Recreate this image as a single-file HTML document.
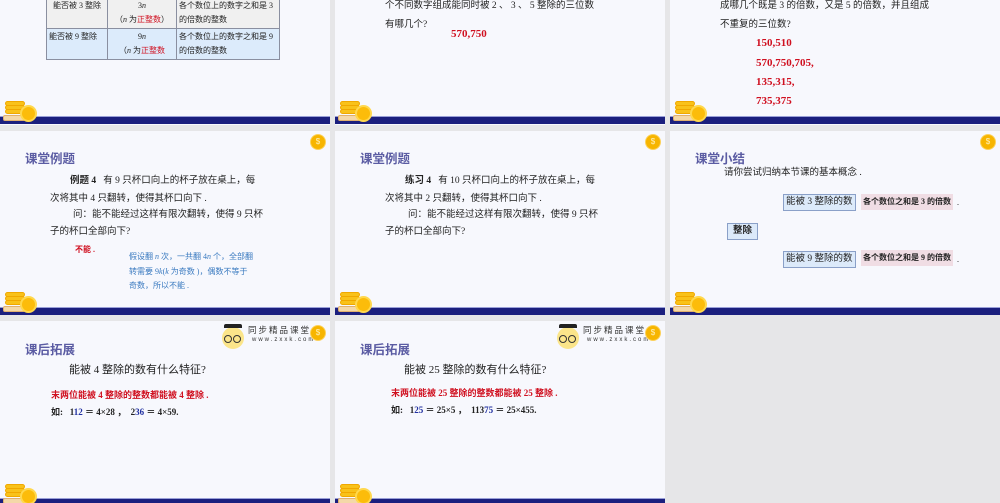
<!DOCTYPE html>
<html><head><meta charset="utf-8"><style>
*{margin:0;padding:0;box-sizing:border-box}
body{width:1000px;height:503px;background:#e6e6e8;position:relative;overflow:hidden;font-family:"Liberation Serif","Noto Sans CJK SC",serif;color:#222}
.s{position:absolute;background:#f7f8fd;overflow:hidden}
.bar{position:absolute;left:0;right:0;height:8px;background:#1b1f7e;border-top:1px solid #9aa0d8;z-index:1}
.a{position:absolute;white-space:nowrap;font-size:9.5px;line-height:18px}
.t{position:absolute;font-family:"Liberation Sans","Noto Sans CJK SC",sans-serif;font-weight:bold;color:#5b5ca3;font-size:12.5px}
.r{color:#d01020;font-weight:bold}
.b{color:#2030a0}
.coin{position:absolute;width:14px;height:14px;border-radius:50%;background:#f7b500;box-shadow:0 0 0 1px #fcd15a;color:#fff3c0;font:8px "Liberation Sans",sans-serif;text-align:center;line-height:14px;z-index:3}
.stack{position:absolute;left:3px;width:34px;height:22px;z-index:2}
.stack i{position:absolute;left:2px;width:20px;height:5px;border-radius:3px;background:#f9c21a;border:1px solid #f0a800}
.stack b{position:absolute;left:17px;top:4px;width:17px;height:17px;border-radius:50%;background:#fcbc0a;border:2px solid #ffd84d}
.stack u{position:absolute;left:0;top:14px;width:22px;height:6px;background:#f4d8a8;border:1px solid #e0b070;border-radius:2px}
.logo{position:absolute;font-family:"Noto Sans CJK SC",sans-serif;font-size:8.5px;letter-spacing:2px;color:#333}
.face{position:absolute;width:22px;height:22px;border-radius:50%;background:#fbe58a}
.gl{position:absolute;width:8px;height:8px;border:1.5px solid #333;border-radius:50%;top:8px}
table{position:absolute;border-collapse:collapse;font-size:8px;font-family:"Liberation Serif","Noto Sans CJK SC",serif}
td{border:1px solid #8a8fa0;padding:1px 2px;line-height:14px;vertical-align:top}
</style></head><body>

<div class="s" style="left:0;top:0;width:330px;height:125px">
<table style="left:46px;top:-3px;width:234px">
<tr style="background:#f0f0f0"><td style="width:61px;text-align:center">能否被 3 整除</td><td style="width:69px;text-align:center">3<i>n</i><br>（<i>n</i> 为<span style="color:#d01020">正整数</span>）</td><td>各个数位上的数字之和是 3<br>的倍数的整数</td></tr>
<tr style="background:#dcebfb"><td>能否被 9 整除</td><td style="text-align:center">9<i>n</i><br>（<i>n</i> 为<span style="color:#d01020">正整数</span></td><td>各个数位上的数字之和是 9<br>的倍数的整数</td></tr>
</table>
<div class="stack" style="top:101px"><i style="top:0"></i><i style="top:4px"></i><i style="top:8px"></i><u></u><b></b></div>
<div class="bar" style="top:116px"></div>
</div>
<div class="s" style="left:335px;top:0;width:330px;height:125px">
<div class="a" style="left:50px;top:-3px">个不同数字组成能同时被 2 、 3 、 5 整除的三位数</div>
<div class="a" style="left:50px;top:16px">有哪几个?</div>
<div class="a r" style="left:116px;top:25px;font-size:11px">570,750</div>
<div class="stack" style="top:101px"><i style="top:0"></i><i style="top:4px"></i><i style="top:8px"></i><u></u><b></b></div>
<div class="bar" style="top:116px"></div>
</div>
<div class="s" style="left:670px;top:0;width:330px;height:125px">
<div class="a" style="left:50px;top:-3px">成哪几个既是 3 的倍数，又是 5 的倍数，并且组成</div>
<div class="a" style="left:50px;top:16px">不重复的三位数?</div>
<div class="a r" style="left:86px;top:34px;font-size:11px">150,510</div>
<div class="a r" style="left:86px;top:54px;font-size:11px">570,750,705,</div>
<div class="a r" style="left:86px;top:73px;font-size:11px">135,315,</div>
<div class="a r" style="left:86px;top:92px;font-size:11px">735,375</div>
<div class="stack" style="top:101px"><i style="top:0"></i><i style="top:4px"></i><i style="top:8px"></i><u></u><b></b></div>
<div class="bar" style="top:116px"></div>
</div>

<div class="s" style="left:0;top:131px;width:330px;height:184px">
<div class="coin" style="left:311px;top:4px">$</div>
<div class="t" style="left:25px;top:17px">课堂例题</div>
<div class="a" style="left:70px;top:41px"><b>例题 4</b>&nbsp;&nbsp;&nbsp;有 9 只杯口向上的杯子放在桌上，每</div>
<div class="a" style="left:50px;top:59px">次将其中 4 只翻转，使得其杯口向下 .</div>
<div class="a" style="left:73px;top:75px">问：能不能经过这样有限次翻转，使得 9 只杯</div>
<div class="a" style="left:50px;top:92px">子的杯口全部向下?</div>
<div class="a r" style="left:75px;top:110px;font-size:8px">不能 .</div>
<div class="a" style="left:129px;top:117px;font-size:8px;color:#3a7ac0">假设翻 <i>n</i> 次，一共翻 4<i>n</i> 个，全部翻</div>
<div class="a" style="left:129px;top:132px;font-size:8px;color:#3a7ac0">转需要 9<i>k</i>(<i>k</i> 为奇数 )，偶数不等于</div>
<div class="a" style="left:129px;top:146px;font-size:8px;color:#3a7ac0">奇数，所以不能 .</div>
<div class="stack" style="top:161px"><i style="top:0"></i><i style="top:4px"></i><i style="top:8px"></i><u></u><b></b></div>
<div class="bar" style="top:176px"></div>
</div>
<div class="s" style="left:335px;top:131px;width:330px;height:184px">
<div class="coin" style="left:311px;top:4px">$</div>
<div class="t" style="left:25px;top:17px">课堂例题</div>
<div class="a" style="left:70px;top:41px"><b>练习 4</b>&nbsp;&nbsp;&nbsp;有 10 只杯口向上的杯子放在桌上，每</div>
<div class="a" style="left:50px;top:59px">次将其中 2 只翻转，使得其杯口向下 .</div>
<div class="a" style="left:73px;top:75px">问：能不能经过这样有限次翻转，使得 9 只杯</div>
<div class="a" style="left:50px;top:92px">子的杯口全部向下?</div>
<div class="stack" style="top:161px"><i style="top:0"></i><i style="top:4px"></i><i style="top:8px"></i><u></u><b></b></div>
<div class="bar" style="top:176px"></div>
</div>
<div class="s" style="left:670px;top:131px;width:330px;height:184px">
<div class="coin" style="left:311px;top:4px">$</div>
<div class="t" style="left:25px;top:17px">课堂小结</div>
<div class="a" style="left:54px;top:33px">请你尝试归纳本节课的基本概念 .</div>
<div class="a" style="left:113px;top:63px;border:1px solid #8aa0c8;background:#dceafa;line-height:15px;padding:0 2px">能被 3 整除的数</div>
<div class="a" style="left:191px;top:63px;background:#f0dde4;font-weight:bold;font-size:8px;line-height:16px;padding:0 2px">各个数位之和是 3 的倍数</div><div class="a" style="left:287px;top:63px;font-size:8px">.</div>
<div class="a" style="left:57px;top:92px;border:1px solid #8aa0c8;background:#dceafa;line-height:15px;padding:0 5px;font-weight:bold">整除</div>
<div class="a" style="left:113px;top:120px;border:1px solid #8aa0c8;background:#dceafa;line-height:15px;padding:0 2px">能被 9 整除的数</div>
<div class="a" style="left:191px;top:119px;background:#f0dde4;font-weight:bold;font-size:8px;line-height:16px;padding:0 2px">各个数位之和是 9 的倍数</div><div class="a" style="left:287px;top:120px;font-size:8px">.</div>
<div class="stack" style="top:161px"><i style="top:0"></i><i style="top:4px"></i><i style="top:8px"></i><u></u><b></b></div>
<div class="bar" style="top:176px"></div>
</div>

<div class="s" style="left:0;top:321px;width:330px;height:182px">
<div class="face" style="left:222px;top:6px"></div><div class="gl" style="left:224px;top:14px"></div><div class="gl" style="left:233px;top:14px"></div>
<div style="position:absolute;left:224px;top:3px;width:18px;height:4px;background:#222;border-radius:2px 2px 0 0"></div>
<div class="logo" style="left:248px;top:3px">同步精品课堂</div>
<div class="logo" style="left:252px;top:16px;font-size:6px;font-family:'Liberation Sans',sans-serif">www.zxxk.com</div>
<div class="coin" style="left:311px;top:5px">$</div>
<div class="t" style="left:25px;top:18px">课后拓展</div>
<div class="a" style="left:69px;top:40px;font-size:11px">能被 4 整除的数有什么特征?</div>
<div class="a r" style="left:51px;top:65px;font-size:9px">末两位能被 4 整除的整数都能被 4 整除 .</div>
<div class="a" style="left:51px;top:82px;font-size:9px;font-weight:bold">如:&nbsp;&nbsp; 1<span class="b">12</span> ＝ 4×28 ，&nbsp; 2<span class="b">36</span> ＝ 4×59.</div>
<div class="stack" style="top:163px"><i style="top:0"></i><i style="top:4px"></i><i style="top:8px"></i><u></u><b></b></div>
<div class="bar" style="top:177px"></div>
</div>
<div class="s" style="left:335px;top:321px;width:330px;height:182px">
<div class="face" style="left:222px;top:6px"></div><div class="gl" style="left:224px;top:14px"></div><div class="gl" style="left:233px;top:14px"></div>
<div style="position:absolute;left:224px;top:3px;width:18px;height:4px;background:#222;border-radius:2px 2px 0 0"></div>
<div class="logo" style="left:248px;top:3px">同步精品课堂</div>
<div class="logo" style="left:252px;top:16px;font-size:6px;font-family:'Liberation Sans',sans-serif">www.zxxk.com</div>
<div class="coin" style="left:311px;top:5px">$</div>
<div class="t" style="left:25px;top:18px">课后拓展</div>
<div class="a" style="left:69px;top:40px;font-size:11px">能被 25 整除的数有什么特征?</div>
<div class="a r" style="left:56px;top:63px;font-size:9px">末两位能被 25 整除的整数都能被 25 整除 .</div>
<div class="a" style="left:56px;top:80px;font-size:9px;font-weight:bold">如:&nbsp;&nbsp; 1<span class="b">25</span> ＝ 25×5 ，&nbsp; 113<span class="b">75</span> ＝ 25×455.</div>
<div class="stack" style="top:163px"><i style="top:0"></i><i style="top:4px"></i><i style="top:8px"></i><u></u><b></b></div>
<div class="bar" style="top:177px"></div>
</div>
</body></html>
